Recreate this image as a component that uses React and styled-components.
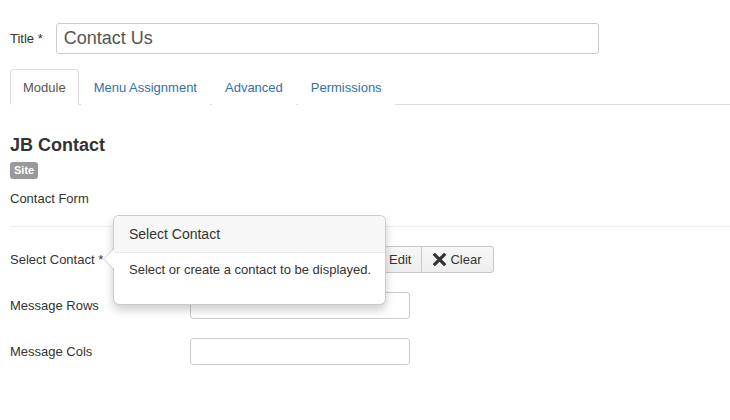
import React from 'react'
import styled, { createGlobalStyle } from 'styled-components'

const GlobalStyle = createGlobalStyle`
  body {
    margin: 0;
    background: #fff;
    font-family: "Liberation Sans", Arial, sans-serif;
    font-size: 13px;
    color: #333;
  }
`

const Page = styled.div`
  padding: 23px 0 0 10px;
  width: 720px;
  height: 397px;
  overflow: hidden;
`

const TitleRow = styled.div`
  display: flex;
  align-items: center;
  gap: 13px;
`

const Label = styled.label`
  font-size: 13px;
  color: #333;
  width: ${p => p.width || 'auto'};
  flex-shrink: 0;
`

const TitleInput = styled.div`
  box-sizing: border-box;
  width: 543px;
  height: 31px;
  border: 1px solid #ccc;
  border-radius: 3px;
  padding: 0 7px;
  display: flex;
  align-items: center;
  font-size: 18px;
  color: #555;
`

const Tabs = styled.ul`
  list-style: none;
  display: flex;
  margin: 15px 0 0;
  padding: 0;
  border-bottom: 1px solid #ddd;
`

const Tab = styled.li`
  box-sizing: border-box;
  height: 36px;
  margin-right: 2px;
  margin-bottom: -1px;
  padding: 0 12px;
  display: flex;
  align-items: center;
  border: 1px solid ${p => (p.active ? '#ddd' : 'transparent')};
  border-bottom-color: ${p => (p.active ? '#fff' : 'transparent')};
  border-radius: 4px 4px 0 0;
  background: #fff;
  color: ${p => (p.active ? '#555' : '#3071a9')};
`

const Heading = styled.h3`
  margin: 30px 0 0;
  font-size: 18px;
  line-height: 20px;
  font-weight: bold;
  color: #333;
`

const Badge = styled.span`
  display: inline-block;
  margin-top: 7px;
  padding: 0 4px;
  height: 17px;
  line-height: 17px;
  border-radius: 3px;
  background: #999;
  color: #fff;
  font-size: 11px;
  font-weight: bold;
`

const Description = styled.p`
  margin: 11px 0 0;
  line-height: 17px;
`

const Divider = styled.hr`
  margin: 19px 0 19px;
  border: 0;
  border-top: 1px solid #eee;
`

const ControlGroup = styled.div`
  position: relative;
  display: flex;
  align-items: center;
  margin-bottom: 19px;
`

const TextInput = styled.div`
  box-sizing: border-box;
  width: ${p => p.width || '220px'};
  height: 27px;
  border: 1px solid #ccc;
  border-radius: ${p => p.radius || '3px'};
  background: #fff;
`

const Append = styled.div`
  display: flex;
`

const Button = styled.button`
  box-sizing: border-box;
  height: 27px;
  margin-left: -1px;
  padding: 0 ${p => (p.last ? '12px 0 11px' : '10px')};
  display: flex;
  align-items: center;
  gap: 4px;
  font-family: inherit;
  font-size: 13px;
  color: #333;
  background: linear-gradient(#f7f7f7, #eee);
  border: 1px solid #c8c8c8;
  border-radius: ${p => (p.last ? '0 3px 3px 0' : '0')};
`

const Popover = styled.div`
  position: absolute;
  left: 103px;
  top: -31px;
  width: 273px;
  box-sizing: border-box;
  background: #fff;
  border: 1px solid rgba(0, 0, 0, 0.2);
  border-radius: 6px;
  box-shadow: 0 5px 10px rgba(0, 0, 0, 0.2);
  z-index: 2;

  &::before,
  &::after {
    content: '';
    position: absolute;
    top: 32px;
    border-style: solid;
    border-color: transparent;
  }
  &::before {
    left: -11px;
    border-width: 11px 11px 11px 0;
    border-right-color: rgba(0, 0, 0, 0.18);
  }
  &::after {
    left: -10px;
    top: 33px;
    border-width: 10px 10px 10px 0;
    border-right-color: #fff;
  }
`

const PopoverTitle = styled.div`
  height: 36px;
  padding: 0 15px;
  display: flex;
  align-items: center;
  font-size: 14px;
  color: #333;
  background: #f7f7f7;
  border-bottom: 1px solid #ebebeb;
  border-radius: 5px 5px 0 0;
`

const PopoverBody = styled.div`
  height: 51px;
  padding: 9px 0 0 15px;
  box-sizing: border-box;
  font-size: 13px;
  white-space: nowrap;
  color: #333;
`

const ListIcon = () => (
  <svg width="13" height="13" viewBox="0 0 14 14">
    <path d="M1 3h12M1 7h12M1 11h12" stroke="#333" strokeWidth="2" />
  </svg>
)

const ClearIcon = () => (
  <svg width="13" height="13" viewBox="0 0 14 14">
    <path d="M2 2 L12 12 M12 2 L2 12" stroke="#333" strokeWidth="3.4" strokeLinecap="square" />
  </svg>
)

const App = () => (
  <Page>
    <GlobalStyle />
    <TitleRow>
      <Label>Title *</Label>
      <TitleInput>Contact Us</TitleInput>
    </TitleRow>
    <Tabs>
      <Tab active>Module</Tab>
      <Tab>Menu Assignment</Tab>
      <Tab>Advanced</Tab>
      <Tab>Permissions</Tab>
    </Tabs>
    <Heading>JB Contact</Heading>
    <Badge>Site</Badge>
    <Description>Contact Form</Description>
    <Divider />
    <ControlGroup>
      <Label width="180px">Select Contact *</Label>
      <Append>
        <TextInput width="155px" radius="3px 0 0 3px" />
        <Button aria-label="Select">
          <ListIcon />
        </Button>
        <Button>Edit</Button>
        <Button last>
          <ClearIcon />
          Clear
        </Button>
      </Append>
      <Popover>
        <PopoverTitle>Select Contact</PopoverTitle>
        <PopoverBody>Select or create a contact to be displayed.</PopoverBody>
      </Popover>
    </ControlGroup>
    <ControlGroup>
      <Label width="180px">Message Rows</Label>
      <TextInput />
    </ControlGroup>
    <ControlGroup>
      <Label width="180px">Message Cols</Label>
      <TextInput />
    </ControlGroup>
  </Page>
)

export default App
